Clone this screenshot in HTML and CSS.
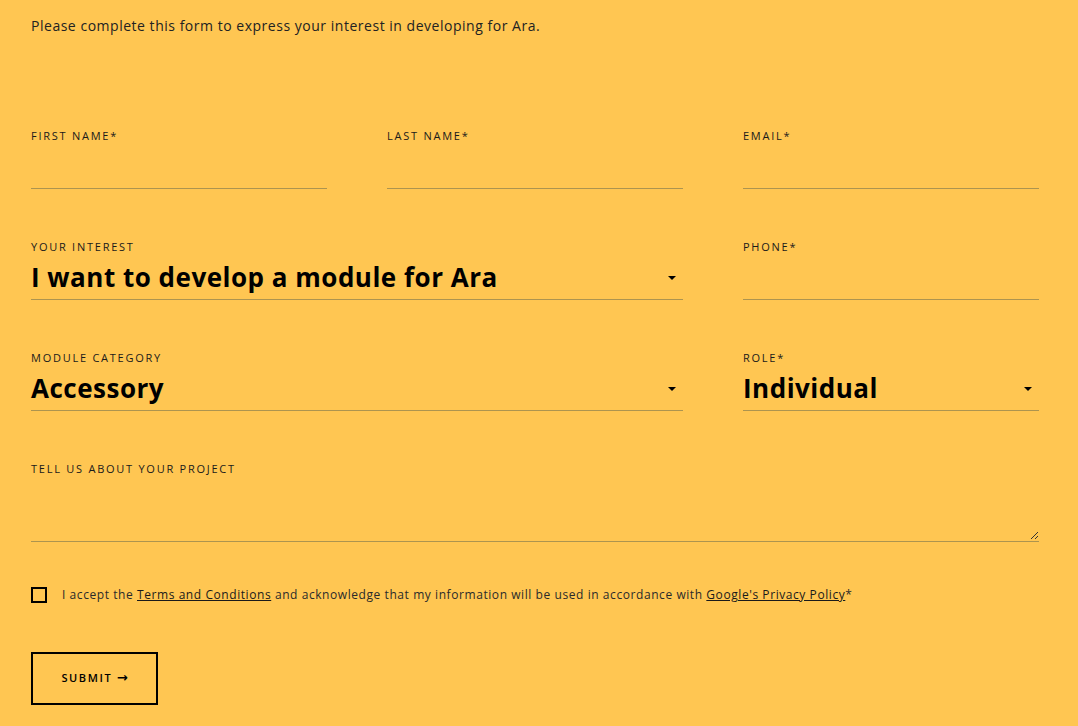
FILE: index.html
```html
<!DOCTYPE html>
<html lang="en">
<head>
<meta charset="utf-8">
<title>Ara developer interest</title>
<link rel="stylesheet" href="styles.css">
</head>
<body>
<div class="page">
  <p class="intro">Please complete this form to express your interest in developing for Ara.</p>
  <form class="form">
    <div class="grid">
      <div class="field">
        <label class="label">First name*</label>
        <div class="control"></div>
      </div>
      <div class="field">
        <label class="label">Last name*</label>
        <div class="control"></div>
      </div>
      <div class="field">
        <label class="label">Email*</label>
        <div class="control"></div>
      </div>

      <div class="field span2">
        <label class="label">Your interest</label>
        <div class="control select"><span class="value">I want to develop a module for Ara</span><span class="caret"></span></div>
      </div>
      <div class="field">
        <label class="label">Phone*</label>
        <div class="control"></div>
      </div>

      <div class="field span2">
        <label class="label">Module category</label>
        <div class="control select"><span class="value">Accessory</span><span class="caret"></span></div>
      </div>
      <div class="field">
        <label class="label">Role*</label>
        <div class="control select"><span class="value">Individual</span><span class="caret"></span></div>
      </div>

      <div class="field span3">
        <label class="label">Tell us about your project</label>
        <div class="control textarea">
          <svg class="grip" width="9" height="9" viewBox="0 0 9 9"><path d="M8 1 L1 8 M8 5 L5 8" stroke="#333" stroke-width="1" fill="none"/></svg>
        </div>
      </div>
    </div>

    <div class="accept">
      <span class="box"></span>
      <span class="accept-text">I accept the <a href="#">Terms and Conditions</a> and acknowledge that my information will be used in accordance with <a href="#">Google's Privacy Policy</a>*</span>
    </div>

    <button type="button" class="submit">Submit <span class="arrow">&rarr;</span></button>
  </form>
</div>
</body>
</html>
```

FILE: styles.css
```css
html, body {
  margin: 0;
  padding: 0;
  background: #ffc652;
}
body {
  font-family: "Open Sans", "DejaVu Sans", sans-serif;
  color: #1a1a1a;
}
.page {
  padding: 0 39px 0 31px;
}
.intro {
  margin: 0;
  padding-top: 16px;
  font-size: 14px;
  line-height: 20px;
  letter-spacing: 0.52px;
  color: #222;
}
.form {
  margin-top: 92px;
}
.grid {
  display: grid;
  grid-template-columns: repeat(3, 296px);
  column-gap: 60px;
  row-gap: 50px;
}
.span2 { grid-column: span 2; }
.span3 { grid-column: span 3; }
.field {
  display: flex;
  flex-direction: column;
}
.label {
  font-size: 11px;
  line-height: 16px;
  letter-spacing: 1.75px;
  text-transform: uppercase;
  color: #1a1a1a;
}
.control {
  height: 44px;
  border-bottom: 1px solid #ad944f;
  position: relative;
}
.select {
  display: flex;
  align-items: center;
  justify-content: space-between;
}
.value {
  font-size: 26px;
  font-weight: 700;
  color: #000;
  line-height: 44px;
  letter-spacing: 0.5px;
}
.caret {
  width: 0;
  height: 0;
  border-left: 4px solid transparent;
  border-right: 4px solid transparent;
  border-top: 4px solid #000;
  margin-right: 7px;
  margin-top: 2px;
}
.textarea {
  height: 64px;
}
.grip {
  position: absolute;
  right: 0;
  bottom: 1px;
}
.accept {
  display: flex;
  align-items: center;
  margin-top: 44px;
}
.box {
  width: 12px;
  height: 12px;
  border: 2px solid #000;
  flex: none;
}
.accept-text {
  margin-left: 15px;
  font-size: 12px;
  letter-spacing: 0.57px;
  color: #2a2a2a;
}
.accept-text a {
  color: #1a1a1a;
  text-decoration: underline;
}
.submit {
  margin-top: 49px;
  width: 127px;
  height: 53px;
  border: 2px solid #000;
  background: transparent;
  font-family: inherit;
  font-size: 11px;
  font-weight: 600;
  letter-spacing: 1.6px;
  text-transform: uppercase;
  color: #000;
  padding: 0 0 3px 0;
  cursor: pointer;
}
.arrow {
  font-size: 13px;
  letter-spacing: 0;
}
```
